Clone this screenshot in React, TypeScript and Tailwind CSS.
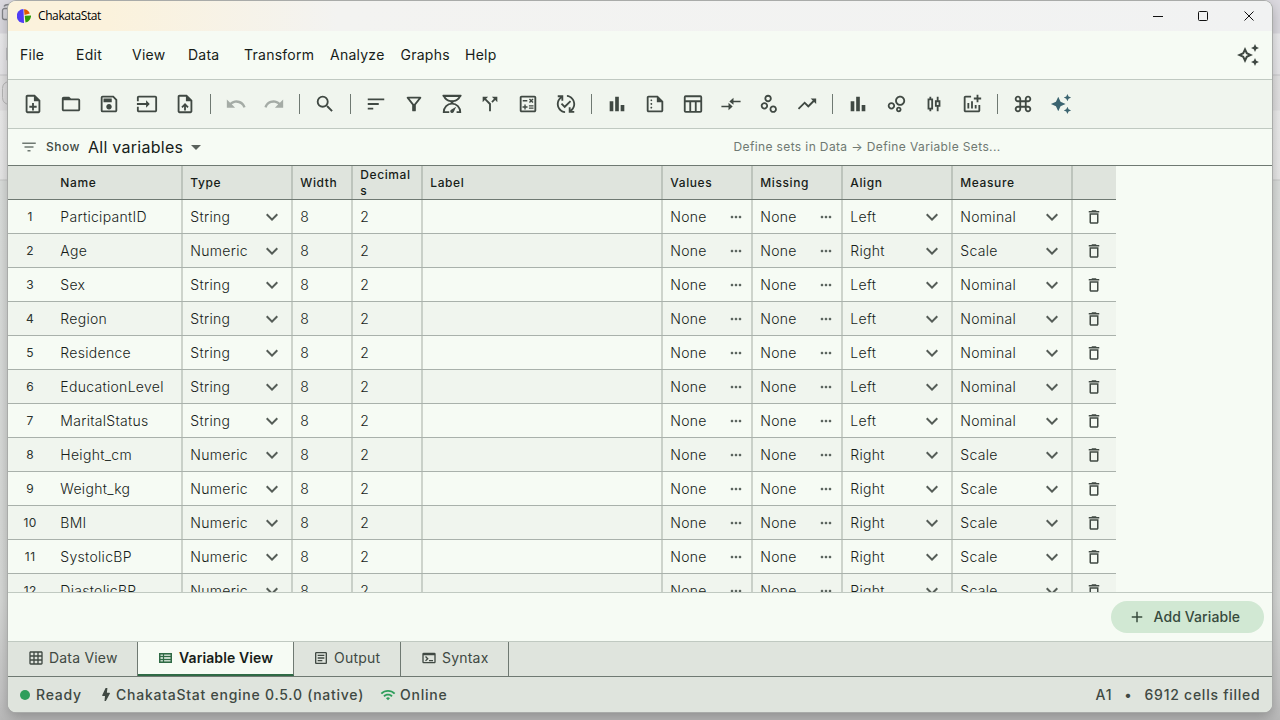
import type { ReactNode } from "react";
import {
  MdOutlineNoteAdd, MdFolderOpen, MdOutlineSave, MdInput, MdOutlineUploadFile, MdUndo, MdRedo, MdSearch, MdSort,
  MdOutlineFilterAlt, MdCallSplit, MdOutlineCalculate, MdOutlinePublishedWithChanges, MdBarChart, MdOutlineSummarize,
  MdTrendingUp, MdOutlineAddchart, MdKeyboardCommandKey,
  MdAutoAwesome, MdFilterList, MdArrowDropDown, MdExpandMore, MdMoreHoriz, MdDeleteOutline, MdAdd,
  MdOutlineArticle, MdOutlineTerminal, MdWifi, MdOutlineScatterPlot, MdOutlineBubbleChart,
  MdOutlineCandlestickChart, MdGridOn,
} from "react-icons/md";

const svg = (children: ReactNode) => (
  <svg viewBox="0 0 24 24" width="1em" height="1em" fill="currentColor">{children}</svg>
);

const WeightIcon = () =>
  svg(
    <>
      <path
        d="M3 3.200h18c-1.500 3.300-4.300 5.300-7.500 5.600h-3C7.300 8.500 4.500 6.500 3 3.200zM9 20.800H3c0-5.200 3.900-9.300 9-9.300s9 4.100 9 9.300h-4"
        fill="none"
        stroke="currentColor"
        strokeWidth="2"
      />
      <path d="M2 2h20v2.400H2zM10.500 8.500h3v3h-3zM16.500 15l-2.600 5.600c-.5 1.100-1.800 1.500-2.900.9-1-.6-1.200-2-.4-2.900z" />
    </>
  );

const TableIcon = () =>
  svg(
    <path
      fillRule="evenodd"
      d="M4 2.500h16a2 2 0 0 1 2 2v15a2 2 0 0 1-2 2H4a2 2 0 0 1-2-2v-15a2 2 0 0 1 2-2zm0 2V8h16V4.500H4zM4 10v9.500h4V10H4zm6 0v9.500h4V10h-4zm6 0v9.500h4V10h-4z"
    />
  );

const CompareIcon = () => svg(<path d="M9.010 14H.500v2h8.510v3.500L14 15l-4.990-4.500v3.500zm5.980-1v-3h8.510V8h-8.510V4.500L10 9l4.990 4z" />);

const SparkleOutline = () =>
  svg(
    <>
      <path
        fillRule="evenodd"
        d="M9 4l2.600 5.500L17 12l-5.400 2.500L9 20l-2.500-5.500L1 12l5.500-2.500L9 4zm0 4.800L8 11l-2.200 1L8 13l1 2.200 1-2.200 2.200-1L10 11 9 8.800z"
      />
      <path d="M19 1l1.250 2.750L23 5l-2.750 1.250L19 9l-1.250-2.750L15 5l2.750-1.250zM19 15l1.250 2.750L23 19l-2.750 1.250L19 23l-1.250-2.750L15 19l2.750-1.250z" />
    </>
  );

const ListTableIcon = () => (
  <svg width="13" height="10" viewBox="0 0 13 10" fill="none" stroke="currentColor">
    <rect x=".75" y=".75" width="11.500" height="8.500" fill="currentColor" fillOpacity=".25" strokeWidth="1.500" />
    <path d="M4.500 1v8M1 3.500h11M1 6.500h11" strokeWidth="1.200" />
  </svg>
);

const BoltIcon = () => (
  <svg width="8" height="13" viewBox="0 0 8 13" fill="currentColor">
    <path d="M3.600 0H5.400L4.900 4.800H7.400c.5 0 .7.500.4.900L3.900 13H2.500L3 8H.8c-.7 0-.8-.5-.5-1z" />
  </svg>
);

const Separator = () => <div className="mx-[6px] h-5 w-px shrink-0 bg-[#6f7972]" />;

const Tool = ({ children, tone = "text-[#404943]" }: { children: ReactNode; tone?: string }) => (
  <button className={`flex h-[38px] w-[38px] shrink-0 items-center justify-center text-[22px] ${tone}`}>{children}</button>
);

const columns = [
  { label: "", width: "w-[44px]" },
  { label: "Name", width: "w-[130px]" },
  { label: "Type", width: "w-[110px]" },
  { label: "Width", width: "w-[60px]" },
  { label: "Decimals", width: "w-[70px]" },
  { label: "Label", width: "w-[240px]" },
  { label: "Values", width: "w-[90px]" },
  { label: "Missing", width: "w-[90px]" },
  { label: "Align", width: "w-[110px]" },
  { label: "Measure", width: "w-[120px]" },
  { label: "", width: "w-[44px]" },
];

const edge = (i: number) =>
  `${i > 0 && i < 10 ? "border-r border-r-[#6f7972]/30" : ""} ${i > 1 ? "border-l border-l-[#6f7972]/30 pl-[7.300px]" : "pl-[8.300px]"}`;

const variables: [string, boolean][] = [
  ["ParticipantID", false],
  ["Age", true],
  ["Sex", false],
  ["Region", false],
  ["Residence", false],
  ["EducationLevel", false],
  ["MaritalStatus", false],
  ["Height_cm", true],
  ["Weight_kg", true],
  ["BMI", true],
  ["SystolicBP", true],
  ["DiastolicBP", true],
];

const Select = ({ children }: { children: ReactNode }) => (
  <div className="flex w-full items-center justify-between pr-[7px]">
    <span>{children}</span>
    <MdExpandMore className="text-[24px] text-[#555d57]" />
  </div>
);

const More = () => (
  <div className="flex w-full items-center justify-between pr-[7px]">
    <span>None</span>
    <MdMoreHoriz className="text-[16px] text-[#59625c]" />
  </div>
);

function Row({ index, name, numeric }: { index: number; name: string; numeric: boolean }) {
  const cells: ReactNode[] = [
    <span className="w-full pr-2 text-center text-[12px] font-normal tracking-[0.4px] text-[#2b332e]">{index}</span>,
    name,
    <Select>{numeric ? "Numeric" : "String"}</Select>,
    "8",
    "2",
    "",
    <More />,
    <More />,
    <Select>{numeric ? "Right" : "Left"}</Select>,
    <Select>{numeric ? "Scale" : "Nominal"}</Select>,
    <MdDeleteOutline className="ml-[5px] text-[18px] text-[#404943]" />,
  ];
  return (
    <div className={`flex h-[34px] w-[1108px] shrink-0 border-b border-[#a9b1ab] ${index % 2 ? "bg-[#f6fbf4]" : "bg-[#f0f5ee]"}`}>
      {cells.map((cell, i) => (
        <div key={i} className={`flex shrink-0 items-center ${columns[i].width} ${edge(i)}`}>
          {cell}
        </div>
      ))}
    </div>
  );
}

const menus = [
  { label: "File", width: "w-[56px]" },
  { label: "Edit", width: "w-[56px]" },
  { label: "View", width: "w-[56px]" },
  { label: "Data", width: "w-[56px]" },
  { label: "Transform", width: "w-[86px]" },
  { label: "Analyze", width: "w-[70.500px]" },
  { label: "Graphs", width: "w-[64.500px]" },
  { label: "Help", width: "w-[50px]" },
];

export default function App() {
  return (
    <div className="relative flex h-[720px] w-[1280px] overflow-hidden bg-[linear-gradient(to_bottom,#dcdae0_0px,#dcdae0_33px,#ececee_34px,#e8e7ea_74px,#c9c9cb_75px,#e4e3e4_76px,#e2e1e2_110px,#ececec_111px,#e9e9e9_179px,#c9cac9_180px,#dcdfdd_181px,#d8dad8_600px,#c4c4c4_700px,#b8b8b8_720px)] px-2 pt-px pb-2 font-['Inter',sans-serif] text-[#171d19]">
      <svg className="absolute left-0 top-0" width="10" height="110" fill="none" stroke="#85868a">
        <path d="M9 8.500H4.500a2 2 0 0 0-2 2v7a2 2 0 0 0 2 2H9M4 6.500q1-2 5-2" strokeWidth="1.300" />
        <path d="M9 48.500H7.500v11H9" stroke="#50515a" strokeWidth="1.500" />
        <path d="M9 81.500q-6.500 1-6.500 7v9q0 6 6.500 7" stroke="#b8b8b8" />
      </svg>
      <div className="relative flex w-[1264px] flex-col overflow-hidden rounded-lg bg-[#f6fbf4] shadow-[0_0_0_1px_#a9aba9,0_4px_14px_rgba(0,0,0,0.28)]">
        <header className="flex h-[30px] shrink-0 items-center bg-[linear-gradient(to_right,#fbf2dc_0px,#fbf2dc_100px,#f3f3f1_330px,#f1f2f2_100%)] pb-px pl-[9px]">
          <svg width="14" height="14" viewBox="0 0 14 14">
            <path d="M6.500 0A7 7 0 0 0 7 14z" fill="#4f3df5" />
            <path d="M7 .2A6.600 6.600 0 0 1 12.800 4.500L7.500 6z" fill="#e05a00" />
            <path d="M7.700 6.800L14 6.400A7 7 0 0 1 8.500 13.600z" fill="#2f9e0b" />
          </svg>
          <span className="ml-[7px] font-['Open_Sans',sans-serif] text-[12px] leading-none tracking-[-0.4px] text-black">ChakataStat</span>
          <svg className="ml-auto mr-[16px]" width="103" height="12" viewBox="0 0 103 12" fill="none" stroke="#111">
            <path d="M0 6.500h10" />
            <rect x="45.500" y="1.500" width="9" height="9" rx="1" />
            <path d="M91.500 1.500l9 9m0-9l-9 9" />
          </svg>
        </header>

        <nav className="flex h-[49px] shrink-0 items-center border-b border-[#c0c9c1] pr-[12px] text-[14px] tracking-[0.25px]">
          <div className="flex pb-[2px] pl-[12px]">
            {menus.map((m) => (
              <button key={m.label} className={`text-left ${m.width}`}>{m.label}</button>
            ))}
          </div>
          <span className="ml-auto text-[24px] text-[#404943]"><SparkleOutline /></span>
        </nav>

        <div className="flex h-[49px] shrink-0 items-center border-b border-[#c0c9c1] bg-[#f0f5ee] pl-[6px]">
          <Tool><MdOutlineNoteAdd /></Tool>
          <Tool><MdFolderOpen /></Tool>
          <Tool><MdOutlineSave /></Tool>
          <Tool><MdInput /></Tool>
          <Tool><MdOutlineUploadFile /></Tool>
          <Separator />
          <Tool tone="text-[#a5aca6]"><MdUndo /></Tool>
          <Tool tone="text-[#a5aca6]"><MdRedo /></Tool>
          <Separator />
          <Tool><MdSearch /></Tool>
          <Separator />
          <Tool><MdSort /></Tool>
          <Tool><MdOutlineFilterAlt /></Tool>
          <Tool><WeightIcon /></Tool>
          <Tool><MdCallSplit /></Tool>
          <Tool><MdOutlineCalculate /></Tool>
          <Tool><MdOutlinePublishedWithChanges /></Tool>
          <Separator />
          <Tool><MdBarChart /></Tool>
          <Tool><MdOutlineSummarize /></Tool>
          <Tool><TableIcon /></Tool>
          <Tool><span className="text-[20px]"><CompareIcon /></span></Tool>
          <Tool><MdOutlineScatterPlot /></Tool>
          <Tool><MdTrendingUp /></Tool>
          <Separator />
          <Tool><MdBarChart /></Tool>
          <Tool><MdOutlineBubbleChart /></Tool>
          <Tool><MdOutlineCandlestickChart /></Tool>
          <Tool><MdOutlineAddchart /></Tool>
          <Separator />
          <Tool><MdKeyboardCommandKey /></Tool>
          <Tool tone="text-[#3b6470]"><MdAutoAwesome /></Tool>
        </div>

        <div className="flex h-[37px] shrink-0 items-center border-b border-[#6f7972] pl-[12px]">
          <MdFilterList className="text-[18px] text-[#6f7972]" />
          <span className="ml-2 text-[12px] font-medium tracking-[0.5px] text-[#404943]">Show</span>
          <span className="ml-2 w-[96px] whitespace-nowrap text-[16px] tracking-[0.27px]">All variables</span>
          <MdArrowDropDown className="text-[24px] text-[#5a625c]" />
          <span className="ml-[525.500px] text-[12px] tracking-[0.38px] text-[#6f7972]">Define sets in Data → Define Variable Sets...</span>
        </div>

        <div className="flex h-[426px] shrink-0 flex-col overflow-hidden text-[14px] font-[350] tracking-[0.3px]">
          <div className="flex h-[34px] w-[1108px] shrink-0 border-b border-[#6f7972] bg-[#dfe4dd] text-[12px] font-[550] tracking-[0.6px]">
            {columns.map((c, i) => (
              <div key={i} className={`flex shrink-0 items-center leading-4 ${c.width} ${edge(i)}`}>
                <span className="w-full pr-2 [overflow-wrap:anywhere]">{c.label}</span>
              </div>
            ))}
          </div>
          {variables.map(([name, numeric], i) => (
            <Row key={name} index={i + 1} name={name} numeric={numeric} />
          ))}
        </div>

        <div className="flex h-[49px] shrink-0 items-center justify-end border-t border-[#c0c9c1] pr-2">
          <button className="flex h-8 w-[153px] items-center rounded-full bg-[#d1e8d3] pl-[17px] text-[14px] font-medium tracking-[0.1px] text-[#374b3d]">
            <MdAdd className="text-[18px]" />
            <span className="mb-px ml-[7.500px]">Add Variable</span>
          </button>
        </div>

        <div className="flex h-[36px] shrink-0 border-t border-b border-t-[#c0c9c1] border-b-[#6f7972] bg-[#dfe4dd] text-[14px] tracking-[0.2px] text-[#404943]">
          <div className="flex w-[130px] items-center border-r border-[#6f7972] pb-[3px] pl-5"><MdGridOn className="mt-px mr-[5px] text-[16px]" />Data View</div>
          <div className="flex w-[156px] items-center border-r border-b-2 border-r-[#6f7972] border-b-[#2f6a45] bg-[#f6fbf4] pb-px pl-[21px] font-semibold tracking-[0.1px] text-[#171d19]">
            <span className="mr-[7px] text-[#2f6a45]"><ListTableIcon /></span>Variable View
          </div>
          <div className="flex w-[107px] items-center border-r border-[#6f7972] pb-[3px] pl-[19px]"><MdOutlineArticle className="mt-px mr-[5px] text-[16px]" />Output</div>
          <div className="flex w-[108px] items-center border-r border-[#6f7972] pb-[3px] pl-5"><MdOutlineTerminal className="mt-px mr-[5px] text-[16px]" />Syntax</div>
        </div>

        <footer className="flex min-h-0 flex-1 items-center bg-[#dfe4dd] px-3 text-[14px] font-medium tracking-[0.75px] text-[#404943]">
          <span className="h-[10px] w-[10px] rounded-full bg-[#2e9e5b]" />
          <span className="ml-[6px] w-[46px]">Ready</span>
          <span className="ml-[20px]"><BoltIcon /></span>
          <span className="ml-[6px] w-[248px] whitespace-nowrap">ChakataStat engine 0.5.0 (native)</span>
          <MdWifi className="ml-4 text-[16px] text-[#2e9e5b]" />
          <span className="ml-1">Online</span>
          <span className="ml-auto">A1</span>
          <span className="mx-3">•</span>
          <span className="-mr-[0.500px]">6912 cells filled</span>
        </footer>
      </div>
    </div>
  );
}
